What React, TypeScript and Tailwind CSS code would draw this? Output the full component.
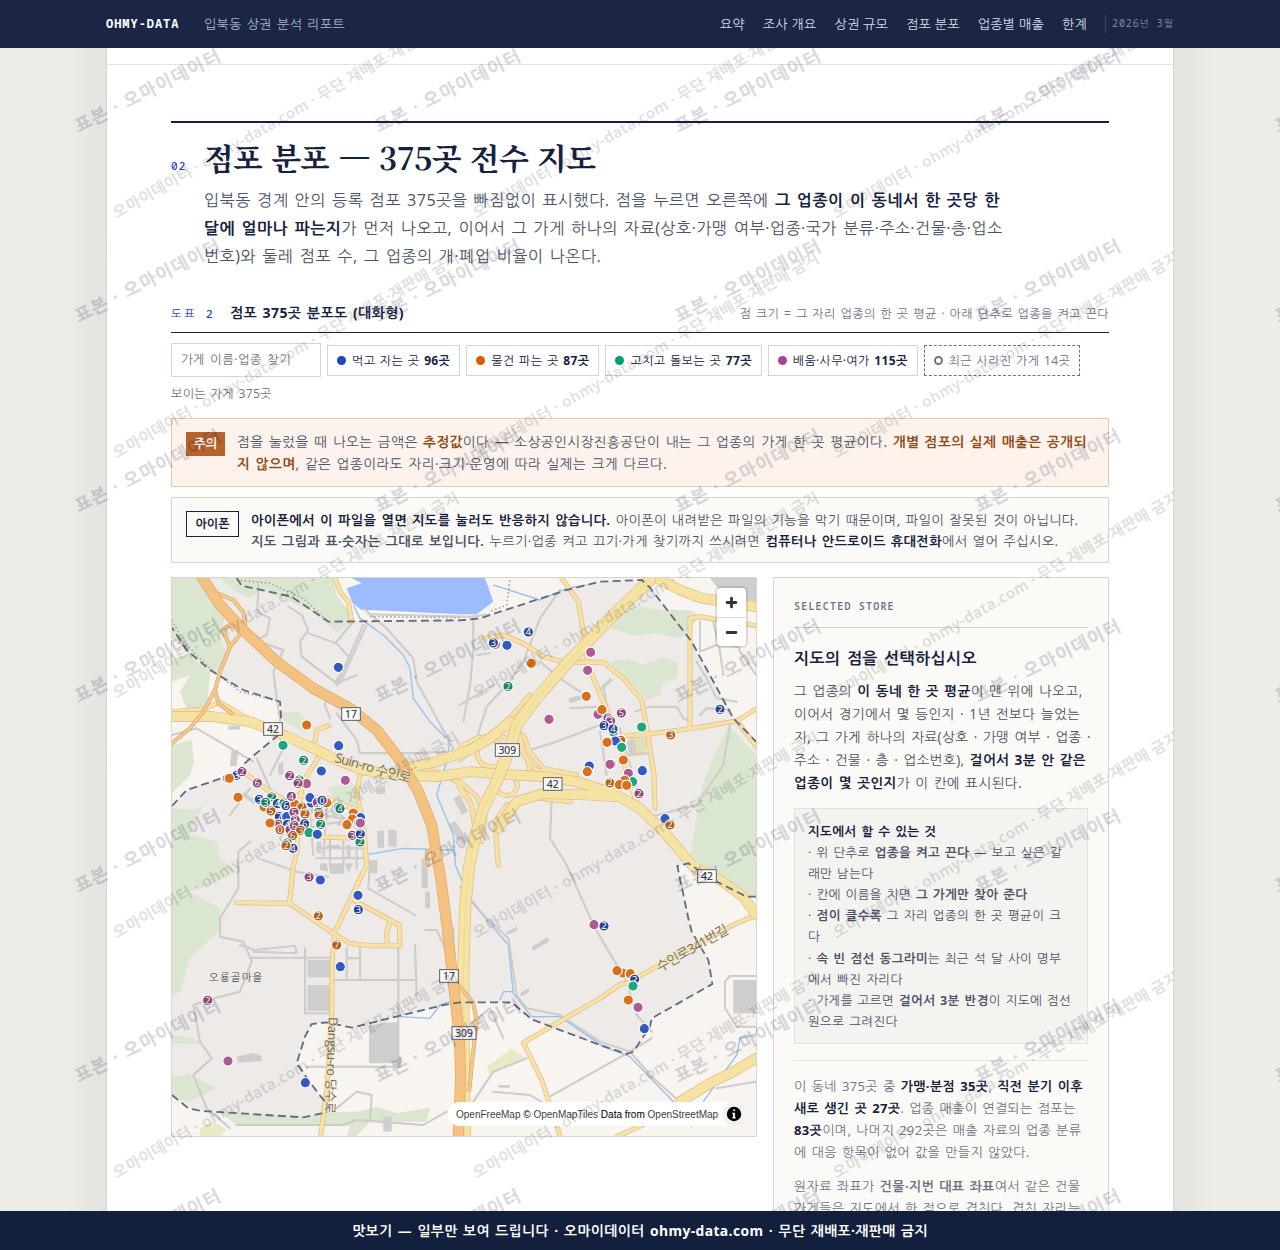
import { Minus, Plus } from "lucide-react";

const KO = "tracking-[0.029em] [word-spacing:0.1em]";
const MONO = "font-['Noto_Sans_Mono',NanumGothic,'Noto_Sans_CJK_KR',monospace]";

const NAV = ["요약", "조사 개요", "상권 규모", "점포 분포", "업종별 매출", "한계"];

const CHIPS = [
  { label: "먹고 자는 곳", count: "96곳", dot: "bg-[#1d47b8]" },
  { label: "물건 파는 곳", count: "87곳", dot: "bg-[#d55e00]" },
  { label: "고치고 돌보는 곳", count: "77곳", dot: "bg-[#009e73]" },
  { label: "배움·사무·여가", count: "115곳", dot: "bg-[#a5468c]" },
];

type Kind = "b" | "o" | "g" | "p";
type Pin = [number, number, Kind, string?];

const FILL: Record<Kind, string> = { b: "#315bc1", o: "#d9701b", g: "#1fa67f", p: "#ae5a95" };
const FILL_GROUP: Record<Kind, string> = { b: "#24489f", o: "#c2600f", g: "#138a68", p: "#93447c" };

const PINS: Pin[] = [
  [505, 277, "b"], [410, 450, "o"], [339, 511, "g"], [506, 512, "b"], [401, 556, "g", "2"], [454, 588, "b"],
  [526, 616, "p"], [200, 601, "b", "3"], [172, 610, "p"], [216, 590, "p", "2"], [178, 610, "o"], [262, 624, "p", "6"],
  [359, 602, "p", "2"], [388, 615, "g", "2"], [410, 626, "p"], [384, 625, "p", "2"], [204, 667, "o"],
  // 서쪽 밀집 구역
  [282, 696, "o"], [268, 673, "b", "3"], [305, 666, "g", "2"], [287, 682, "g", "3"], [322, 686, "b", "4"],
  [342, 684, "g", "2"], [303, 708, "o", "5"], [348, 692, "b", "6"], [375, 688, "o"], [364, 664, "p", "4"],
  [396, 696, "o", "2"], [328, 725, "b", "7"], [350, 725, "b"], [372, 712, "p", "5"], [405, 717, "o", "2"],
  [326, 748, "p", "2"], [300, 744, "o"], [352, 748, "b", "4"], [376, 735, "p", "8"], [404, 746, "b", "6"],
  [330, 764, "o", "0"], [360, 764, "p", "2"], [373, 752, "p", "6"], [392, 766, "o", "3"], [368, 782, "o", "6"],
  [424, 684, "b"], [420, 668, "b"], [442, 682, "p", "2"], [470, 683, "o"], [456, 676, "b", "0"],
  [446, 712, "g", "2"], [447, 720, "o", "2"], [452, 748, "g", "2"], [417, 773, "g"], [442, 778, "b"],
  [352, 804, "g", "2"], [369, 820, "b", "4"], [348, 812, "o", "2"],
  [506, 696, "g"], [510, 701, "g", "4"], [550, 714, "o"], [572, 728, "b"], [547, 732, "o"], [566, 743, "g"],
  [571, 744, "p"], [531, 749, "o"], [547, 781, "p", "3"], [570, 801, "g", "2"], [571, 777, "b", "2"],
  // 동쪽 상가
  [969, 204, "b", "2"], [976, 208, "p", "8"], [970, 204, "b", "3"], [1011, 211, "b"], [1075, 171, "b", "4"],
  [1084, 265, "o"], [1014, 334, "g", "2"], [1262, 232, "p"], [1253, 286, "p"], [1249, 364, "o"],
  [1137, 433, "p"], [1284, 418, "p"], [1296, 404, "o"], [1354, 414, "p", "5"], [1314, 429, "p", "6"],
  [1322, 438, "p", "3"], [1302, 452, "b", "3"], [1330, 470, "g", "4"], [1329, 462, "b", "4"],
  [1352, 496, "o", "6"], [1336, 498, "b"], [1311, 502, "o"], [1355, 517, "g"], [1415, 456, "g"],
  [1502, 480, "o", "3"], [1650, 403, "b", "2"], [1360, 555, "o"], [1324, 568, "p"], [1320, 568, "p"],
  [1258, 573, "b"], [1252, 590, "o"], [1375, 595, "p"], [1417, 587, "b"], [1388, 620, "g"],
  [1320, 624, "o", "2"], [1364, 616, "o"], [1348, 629, "o"], [1370, 631, "o"], [1406, 652, "p"],
  [1407, 656, "p", "2"], [1485, 731, "b"], [1500, 750, "o", "2"],
  // 남쪽
  [417, 906, "p", "3"], [451, 915, "b"], [564, 961, "b"], [565, 1004, "b", "3"], [445, 1023, "o", "2"],
  [500, 1110, "o", "7"], [511, 1175, "b"], [113, 1276, "p", "2"], [174, 1458, "p"], [406, 1523, "b"],
  [1272, 1049, "p"], [1302, 1053, "b", "2"], [1358, 1194, "o"], [1341, 1187, "o"], [1381, 1196, "o"],
  [1394, 1213, "b", "2"], [1389, 1233, "g"], [1375, 1275, "o"], [1404, 1297, "p"], [1423, 1361, "b"],
];

const GREENS = [
  "M6 9H90L120 60 165 120 150 190 170 235 145 290 120 285 50 225 6 190Z",
  "M150 9H490L500 60 530 100 545 140 500 172 430 110 350 75 270 45 240 70 200 50Z",
  "M6 255L55 235 120 290 112 380 90 430 50 400 30 350 60 300 6 320Z",
  "M6 510L65 495 72 560 60 600 6 655Z",
  "M6 700L70 705 100 690 60 780 140 800 150 850 200 890 120 930 60 950 150 1000 155 1060 60 1150 30 1250 6 1260Z",
  "M6 1382L50 1385 95 1400 90 1408 6 1405Z",
  "M6 1505L60 1498 140 1540 60 1580 6 1565Z",
  "M150 1612L420 1625 470 1610 560 1610 620 1595 680 1615 780 1598 770 1640 600 1640 560 1683 530 1683 540 1652 200 1650Z",
  "M1320 160L1350 110 1400 95 1470 105 1560 105 1590 120 1560 160 1530 190 1460 175 1390 180Z",
  "M1320 262L1370 252 1420 270 1480 245 1525 265 1520 310 1480 320 1470 360 1430 375 1390 330Z",
  "M1675 450L1758 540V965L1720 960 1640 910 1562 840 1580 720 1600 620Z",
  "M475 640L540 620 562 640 555 700 500 690Z",
  "M335 412L385 410 432 460 400 470 345 440Z",
];

const MINOR = [
  "M265 30L262 110 300 130 290 180 255 195 340 225 310 290 320 370 332 450",
  "M355 95L395 120 415 165 390 200 395 245 500 325 560 300",
  "M415 175L500 205 540 250 495 325",
  "M495 205L550 140 M500 330L580 150 M510 325L590 150",
  "M580 100L650 160 730 250 740 320 800 430 850 520 830 560",
  "M595 118L900 125 960 118",
  "M470 350L465 390 480 430 M500 415L560 495 570 535H720L840 530",
  "M910 125V230L900 330 880 440 M920 240L960 235 M1170 45L1110 130 1060 260 1010 330 950 395 920 490",
  "M870 390L970 330 M1110 260L1170 310 1230 350 M1200 400L1290 395 M1080 525L1160 500 1290 450",
  "M1395 410L1440 395 1520 395 1540 430 1560 440 M1580 260L1610 310 1640 370 1700 380 M1590 420L1610 400 1680 405",
  "M1145 675L1140 790 1190 870 1275 1060 1370 1220 1400 1320 1445 1370",
  "M1425 730L1580 690 1660 570 1680 450",
  "M1590 140V230L1640 210 1700 215 M1630 140L1650 230 1660 300 M1680 110L1710 230 1758 300",
  "M1290 470L1310 600 M1300 330L1320 450 M1350 460L1400 640 M1370 540L1430 535",
  "M240 800L205 830 205 940 150 1030 150 1085 220 1100 245 1160 210 1250 150 1265 70 1290 90 1400 125 1450 70 1500 110 1600 180 1660",
  "M210 1110L255 1125 375 1112 380 1135 250 1130 M245 1148H485 M405 1120V1315H485",
  "M495 1215H740 M570 1115V1215 M685 1050V1470 M735 1110L740 1260 M410 1475H690L690 1450",
  "M530 1120V1210 M530 1150H565 M265 850L380 890 475 905",
  "M600 860L595 940 735 1020 M850 1060V1320 M765 1065H800L830 1130",
  "M500 1600L560 1550 605 1560 600 1635 M200 1650H520L560 1635 760 1650 830 1610",
  "M870 935L950 1030 1015 1090 1040 1260 1070 1300 1170 1320 1290 1400 1380 1430 1450 1510 1530 1580",
  "M1380 1430L1130 1570 M1445 1390L1380 1430 M900 1350L960 1300 1000 1390",
  "M1070 1450L970 1490 910 1580 M970 1550L1080 1560 1130 1590",
  "M1758 1203H1680L1665 1220V1300L1700 1355H1758 M1640 1540L1758 1520",
  "M370 700L560 740 M420 720L430 840 M470 700L460 850 M500 710L560 760 M410 760L560 730 M240 640L180 720",
  "M440 820H590 M480 790V880 M520 800V890 M560 800V880 M440 850H580",
  "M6 480L80 460 250 560 M260 550L300 640 M350 500L300 600",
];

const YELLOW = [
  "M495 9L510 50 535 80 545 140",
  "M225 595L300 650 370 690 400 700",
  "M370 660L470 670 560 705",
  "M450 540L400 620 385 700 382 820 370 875 358 985",
  "M435 500L440 465 475 452",
  "M430 785L560 790",
  "M570 600L560 660 580 740 590 870 580 890 545 965 495 1070 487 1145 485 1365 470 1545 452 1685",
  "M200 983L358 985 490 1075 540 1105 600 1112H690L688 1050 550 975",
  "M652 1110L650 1070 660 1042",
  "M6 410L100 402 150 382 250 440",
  "M1175 9L1225 80 1238 160 1250 255",
  "M945 190L1000 180 1060 205 1120 245 1190 262 1300 262 1360 310 1415 375 1432 470 1452 600 1455 700",
  "M1250 262L1300 380 1345 480 1370 600 1400 680",
  "M1370 482L1430 478 1570 460 1700 438 1758 402",
  "M1700 438L1758 512",
  "M1560 455V130L1590 125 1758 152",
  "M1758 1020L1690 1050 1520 1142 1370 1225 1350 1228 1290 1270 1060 1403 1115 1515 1170 1683",
  "M1340 1685L1430 1645",
  "M870 515L920 490 980 480 1040 500 1075 560 1080 600",
  "M922 530a38 38 0 1 0 80 10a38 38 0 1 0 -80 -10",
  "M980 620a30 30 0 1 0 60 20a30 30 0 1 0 -60 -20",
  "M1045 460L1060 540 1100 585 1180 600",
  "M1060 480L1078 530 1120 580 1220 600",
  "M870 555L930 500 1010 440 1080 360",
  "M870 620L920 665 945 720 935 800",
  "M870 640L905 690 915 760 900 850",
  "M985 870L975 740 1010 690 1100 668 1200 680 1150 672",
  "M700 580L800 590 860 620 900 680",
];

const WIDE = [
  "M6 424L130 425 240 440 340 480 430 520 500 555 580 585 660 598 800 605 900 590 1000 598 1120 605 1220 620 1330 655 1410 700 1490 780 1570 875 1650 915 1720 965 1758 1020",
  "M700 580L800 560 900 525 960 490 1020 440",
  "M1470 15L1530 45 1590 68 1758 95",
  "M985 760L1040 680 1120 655 1250 660 1340 665",
  "M1530 1580L1620 1525 1690 1490 1758 1450",
];

const EXPRESSWAY = [
  "M1440 15L1320 130 1200 255 1100 370 1040 450 1020 520 980 620 940 700 915 790 898 870 885 1000 880 1200 881 1400 885 1683",
];

const RAMPS = [
  "M130 50L190 75 222 115 225 160 180 215 150 290 135 345 100 410 60 460 6 505",
  "M180 215L158 165 180 150 222 175",
  "M135 345L145 385 185 415",
  "M870 1235L910 1285 920 1340 908 1445 898 1545",
  "M775 870L770 830 800 820 M840 1200L870 1235",
];

const MOTORWAY = "M95 5L150 90 225 170 320 260 430 340 540 400 620 465 690 555 745 650 785 750 805 870 810 895 830 1045 850 1225 868 1385 872 1505 865 1680";

const BOUNDARY =
  "M200 9L215 32 365 65 475 140 870 136 930 130 1190 45 1290 20 1415 15 1440 38 1565 200 1690 430 1758 500V965L1730 965 1640 920 1570 875 1555 865 1522 873 1555 1030 1565 1070 1615 1155 1627 1227 1445 1330 1440 1355 1390 1430 1370 1437 1290 1410 1085 1333 1025 1282 870 1282 820 1290 545 1358 470 1342 425 1347 405 1385 380 1465 415 1515 450 1562 478 1595 455 1615 400 1627 95 1608 55 1600 6 1560";
const BOUNDARY_WEST = "M6 693L50 645 190 598 235 555 325 480 335 455 330 380 220 345 120 285 50 225 6 158";

const RIVERS = [
  "M550 90L570 130 640 180 700 240 720 280 730 370 780 440 840 500 830 560 800 660 850 780 856 870 900 975 1015 1110 1030 1255 1085 1325 1170 1325 1300 1415 1380 1445 1510 1580 1565 1655",
  "M595 838L700 820 850 825",
  "M690 1325L780 1330 810 1290 870 1270 M990 1275L1000 1250 1030 1250",
  "M970 30L1110 75 1190 40 1250 30",
  "M1600 1580L1700 1440 1710 1390 1758 1378",
];

const BUILDINGS = [
  "M412 1155h68v52h-68z", "M412 1230h68v78h-68z", "M597 1350L685 1340V1465H597Z", "M1690 1215h68v100h-68z",
  "M185 525h20l-5 48h-20z", "M325 565l15-5v40h-15z", "M622 768h20v50h-20z", "M655 765h25v50h-25z",
  "M850 670l20-10 25 50-20 10z", "M835 750l20-12 40 60-20 12z", "M755 850h18v90h-18z", "M765 950h15v50h-15z",
  "M480 865h40v32h-40z", "M450 865l20 0 5 25-25-5z", "M525 865h25l-15 30z", "M600 855h22v40h-22z",
  "M200 1445l50-12 25 10v15l-70 5z", "M640 1625h25v45h-25z", "M615 640l30-8v25h-25z", "M175 452h35v12h-35z",
  "M1085 1115l48-28 5 12-48 28z", "M1010 1070l30-15 3 10-30 15z", "M1050 1255l25-15 4 10-25 15z",
  "M1290 340l30-30 10 5-40 35z", "M1195 370l60-15 5 12-60 18z", "M1370 500l20-10 10 40-20 15z", "M1620 9h138v70l-100-20z",
  "M410 690l20-8 10 30-20 8z", "M480 700l20-8 12 26-22 10z", "M500 740h30v12h-30z", "M440 800h14v34h-14z", "M470 810h40v10h-40z",
  "M220 650l40 28-8 10-40-28z", "M300 690l35-15 4 12-35 15z", "M530 810h12v38h-12z", "M985 1530h35v8h-35z",
];

const SHIELDS: [number, number, string][] = [
  [543, 417, "17"], [309, 462, "42"], [1012, 525, "309"], [1148, 627, "42"], [837, 1203, "17"], [882, 1374, "309"], [1611, 903, "42"],
];

function Roads({ list, width, fill, edge }: { list: string[]; width: number; fill: string; edge: string }) {
  return (
    <g fill="none" strokeLinejoin="round" strokeLinecap="round">
      {list.map((d) => <path key={d} d={d} stroke={edge} strokeWidth={width + 4} />)}
      {list.map((d) => <path key={d} d={d} stroke={fill} strokeWidth={width} />)}
    </g>
  );
}

function StoreMap() {
  return (
    <svg viewBox="6 9 1752 1674" className="block h-full w-full" preserveAspectRatio="none">
      <rect x="6" y="9" width="1752" height="1674" fill="#f8f4f0" />
      <path d={`${BOUNDARY}V693${BOUNDARY_WEST.replace("M6 693", "")}V9Z`} fill="#edeae8" />
      {GREENS.map((d) => <path key={d} d={d} fill="#dae6cf" />)}
      <path d="M950 1475L1025 1420 1070 1450 960 1500Z M90 1660L130 1640 170 1665 150 1683H90Z" fill="#e8e9c6" />
      <path d="M1375 480L1430 490V540L1380 545Z" fill="#dfdfb8" />
      <path d="M545 9L575 25 530 40 548 85 575 105 600 105 870 118 920 118 970 80 945 9Z" fill="#9dbcff" />
      {BUILDINGS.map((d) => <path key={d} d={d} fill="#d0cecc" />)}
      {RIVERS.map((d) => <path key={d} d={d} fill="none" stroke="#93c3f0" strokeWidth="4" strokeLinejoin="round" />)}
      <Roads list={MINOR} width={2} fill="#d9d6d4" edge="#c8c6c4" />
      <g fill="none" stroke="#aaa9a8" strokeWidth="5" strokeDasharray="5 7">
        <path d="M200 15L300 25 400 70 470 135M600 125L870 128M6 135L40 200 120 280 210 350 325 378M1020 15L1010 90 960 110" />
      </g>
      <Roads list={YELLOW} width={11} fill="#f5e2a4" edge="#e6b98b" />
      <Roads list={WIDE} width={28} fill="#f5e3a3" edge="#e3b984" />
      <Roads list={EXPRESSWAY} width={32} fill="#f5e3a3" edge="#e3b984" />
      <path d={EXPRESSWAY[0]} fill="none" stroke="#e9cf94" strokeWidth="1.500" />
      <Roads list={RAMPS} width={8} fill="#f4c98c" edge="#dda468" />
      <Roads list={[MOTORWAY]} width={29} fill="#f4c280" edge="#e2a569" />
      <g fill="none" stroke="#636b80" strokeWidth="5.500" strokeDasharray="24 13">
        <path d={BOUNDARY.replace("V965L1730 965", "M1758 965L1730 965")} />
        <path d={BOUNDARY_WEST} />
      </g>
      <g fontFamily="'Open Sans',NanumGothic,'Noto Sans CJK KR',sans-serif" fill="#6b655c" stroke="#f5e9c8" strokeWidth="3" paintOrder="stroke">
        <text x="492" y="560" fontSize="40" transform="rotate(16 492 560)" textLength="236">Suin-ro 수인로</text>
        <text x="476" y="1326" fontSize="38" transform="rotate(92 476 1326)" textLength="290">Dangsu-ro 당수로</text>
        <text x="1470" y="1192" fontSize="40" transform="rotate(-30 1470 1192)" textLength="240">수인로341번길</text>
        <text x="117" y="1219" fontSize="31" fill="#444" stroke="#f4f1ee" textLength="160">오룡골마을</text>
      </g>
      <g fontFamily="'Open Sans',sans-serif" fontSize="31" fill="#333" stroke="#333" strokeWidth="0.600" textAnchor="middle">
        {SHIELDS.map(([x, y, n]) => (
          <g key={`${x}-${y}`}>
            <rect x={x - (n.length > 2 ? 36 : 28)} y={y - 19} width={n.length > 2 ? 72 : 56} height="38" fill="#fbfbfb" stroke="#5a5f66" strokeWidth="3" />
            <text x={x} y={y + 11}>{n}</text>
          </g>
        ))}
      </g>
      <g fontFamily="'Open Sans',sans-serif" fontSize="29" fill="#fff" textAnchor="middle">
        {PINS.map(([x, y, kind, n], i) => (
          <g key={i}>
            <circle cx={x} cy={y} r="15.500" fill={n ? FILL_GROUP[kind] : FILL[kind]} stroke="#fff" strokeWidth="3.500" />
            {n && <text x={x} y={y + 10} stroke="#5b5560" strokeWidth="1.500" paintOrder="stroke">{n}</text>}
          </g>
        ))}
      </g>
    </svg>
  );
}

const range = (n: number) => Array.from({ length: n }, (_, i) => i);

function PageWatermark() {
  return (
    <svg className="pointer-events-none absolute inset-0 h-full w-full" viewBox="0 48 1280 1163" fill="#14143c" opacity="0.16">
      {range(7).flatMap((r) =>
        range(5).map((c) => {
          const x = 79 + c * 300;
          const y = 133 + r * 190;
          return (
            <text key={`${r}-${c}`} x={x} y={y} transform={`rotate(-27 ${x} ${y})`} fontFamily="NanumGothic,'Noto Sans CJK KR',sans-serif" fontWeight="700" fontSize="17.5" stroke="#14143c" strokeWidth="0.400" textLength="160">
              표본 · 오마이데이터
            </text>
          );
        })
      )}
    </svg>
  );
}

function SheetWatermark() {
  return (
    <svg className="pointer-events-none absolute inset-0 h-full w-full" viewBox="107 48 1066 1163" fill="#000" opacity="0.12">
      {range(5).flatMap((r) =>
        range(3).map((c) => {
          const x = 117 + c * 360;
          const y = 219 + r * 240;
          return (
            <text key={`${r}-${c}`} x={x} y={y} transform={`rotate(-30 ${x} ${y})`} fontFamily="'Open Sans',NanumGothic,'Noto Sans CJK KR',sans-serif" fontWeight="600" fontSize="15" stroke="#000" strokeWidth="0.200" textLength="396">
              오마이데이터 · ohmy-data.com · 무단 재배포·재판매 금지
            </text>
          );
        })
      )}
    </svg>
  );
}

function TopBar() {
  return (
    <header className="flex h-12 shrink-0 items-center justify-between bg-[#1a2644] px-[106px]">
      <div className="flex items-center">
        <span className={`${MONO} w-[98px] text-[12px] font-bold tracking-[0.08em] text-white`}>OHMY-DATA</span>
        <span className={`pt-px text-[13px] text-[#a9b3c8] ${KO}`}>입북동 상권 분석 리포트</span>
      </div>
      <nav className="flex items-center">
        {NAV.map((n) => (
          <a key={n} className="mr-[18px] pt-px text-[13.2px] tracking-[0.01em] text-[#d5dae6]">{n}</a>
        ))}
        <span className={`${MONO} h-[18px] border-l border-[#3a4866] pl-1.5 text-[10px] leading-[17px] tracking-[0.09em] text-[#7f8aa5]`}>2026년 3월</span>
      </nav>
    </header>
  );
}

function SidePanel() {
  return (
    <aside className="h-[800px] w-[336px] border border-[#d9d5cc] bg-[#fbfaf6] px-5 whitespace-nowrap">
      <div className={`${MONO} flex h-[50px] items-end border-b border-[#d9d5cc] pb-[13px] text-[10px] leading-4 font-semibold tracking-[0.12em] text-[#6a7488]`}>
        SELECTED STORE
      </div>
      <h4 className={`mt-[18px] text-[16px] leading-6 font-bold text-[#14213f] ${KO}`}>지도의 점을 선택하십시오</h4>
      <p className={`mt-[9px] text-[13.6px] leading-[23px] text-[#4a5468] [&_b]:text-[#14213f] ${KO}`}>
        그 업종의 <b>이 동네 한 곳 평균</b>이 맨 위에 나오고,<br />
        이어서 경기에서 몇 등인지 · 1년 전보다 늘었는<br />
        지, 그 가게 하나의 자료(상호 · 가맹 여부 · 업종 ·<br />
        주소 · 건물 · 층 · 업소번호), <b>걸어서 3분 안 같은</b><br />
        <b>업종이 몇 곳인지</b>가 이 칸에 표시된다.
      </p>
      <div className={`mt-[14px] h-[236px] border border-[#e3e1dc] bg-[#f4f3f0] px-[13px] pt-3 text-[12.5px] leading-[21.1px] text-[#4a5468] ${KO}`}>
        <b className="text-[#14213f]">지도에서 할 수 있는 것</b><br />
        · 위 단추로 <b>업종을 켜고 끈다</b> — 보고 싶은 갈<br />
        래만 남는다<br />
        · 칸에 이름을 치면 <b>그 가게만 찾아 준다</b><br />
        · <b>점이 클수록</b> 그 자리 업종의 한 곳 평균이 크<br />
        다<br />
        · <b>속 빈 점선 동그라미</b>는 최근 석 달 사이 명부<br />
        에서 빠진 자리다<br />
        · 가게를 고르면 <b>걸어서 3분 반경</b>이 지도에 점선<br />
        원으로 그려진다
      </div>
      <div className={`mt-4 border-t border-[#e5e2da] pt-[14px] text-[13px] leading-[22px] text-[#6c7587] ${KO}`}>
        <p className="[&_b]:text-[#14213f]">
          이 동네 375곳 중 <b>가맹·분점 35곳</b>, <b>직전 분기 이후</b><br />
          <b>새로 생긴 곳 27곳</b>. 업종 매출이 연결되는 점포는<br />
          <b>83곳</b>이며, 나머지 292곳은 매출 자료의 업종 분류<br />
          에 대응 항목이 없어 값을 만들지 않았다.
        </p>
        <p className="mt-3">
          원자료 좌표가 <b>건물·지번 대표 좌표</b>여서 같은 건물<br />
          가게들은 지도에서 한 점으로 겹친다. 겹친 자리는
        </p>
      </div>
    </aside>
  );
}

export default function App() {
  return (
    <div lang="ko" className="flex h-[1250px] flex-col overflow-hidden bg-[#eeece7] font-['Open_Sans',NanumGothic,'Noto_Sans_CJK_KR',sans-serif]">
      <TopBar />
      <div className="relative min-h-0 flex-1 overflow-hidden">
        <main className="relative mx-[106px] h-[1163px] overflow-hidden border-x border-[#d9d5cc] bg-white">
          <div className="h-[17px] border-b border-[#e5e2da]" />
          <section className="mx-16 mt-14 border-t-2 border-[#14213f] whitespace-nowrap">
            <div className="flex items-baseline pt-[13px]">
              <span className={`${MONO} w-[33px] text-[11px] font-medium tracking-[0.1em] text-[#1d47b8]`}>02</span>
              <h2 className="font-['Noto_Serif_KR','Noto_Serif_CJK_KR',serif] text-[30.8px] leading-[42px] font-bold tracking-[-0.02em] text-[#14213f]">점포 분포 — 375곳 전수 지도</h2>
            </div>
            <p className={`mt-2 ml-[33px] text-[16.12px] leading-7 text-[#4a5468] [&_b]:text-[#14213f] ${KO}`}>
              입북동 경계 안의 등록 점포 375곳을 빠짐없이 표시했다. 점을 누르면 오른쪽에 <b>그 업종이 이 동네서 한 곳당 한</b><br />
              <b>달에 얼마나 파는지</b>가 먼저 나오고, 이어서 그 가게 하나의 자료(상호·가맹 여부·업종·국가 분류·주소·건물·층·업소<br />
              번호)와 둘레 점포 수, 그 업종의 개·폐업 비율이 나온다.
            </p>

            <div className="mt-[30px] flex h-[33px] items-baseline border-b border-[#14213f] pt-[2px]">
              <span className={`${MONO} w-[59px] text-[11.5px] font-medium tracking-[0.18em] text-[#1d47b8]`}>도표 2</span>
              <h3 className={`text-[14px] font-bold text-[#14213f] ${KO}`}>점포 375곳 분포도 (대화형)</h3>
              <span className={`ml-auto text-[12.1px] text-[#6a7488] ${KO}`}>점 크기 = 그 자리 업종의 한 곳 평균 · 아래 단추로 업종을 켜고 끈다</span>
            </div>

            <div className="mt-[10px] flex items-center gap-1.5">
              <div className={`h-[34px] w-[150px] border border-[#d9d5cc] bg-white pl-[9px] text-[12.5px] leading-8 text-[#757575] ${KO}`}>가게 이름·업종 찾기</div>
              {CHIPS.map((c) => (
                <div key={c.label} className={`mt-px flex h-[31px] items-center border border-[#d9d5cc] bg-white px-[9px] text-[12px] text-[#14213f] ${KO}`}>
                  <i className={`mr-[6px] size-[9px] rounded-full ${c.dot}`} />
                  {c.label}&nbsp;<b>{c.count}</b>
                </div>
              ))}
              <div className={`mt-px flex h-[31px] items-center border border-dashed border-[#6a7488] bg-white px-[9px] text-[12px] text-[#6a7488] ${KO}`}>
                <i className="mr-[6px] size-[9px] rounded-full border-2 border-[#6a7488]" />
                최근 사라진 가게 14곳
              </div>
            </div>
            <p className={`mt-2 text-[12px] leading-[18px] text-[#6a7488] ${KO}`}>보이는 가게 375곳</p>

            <div className="mt-[15px] flex h-[69px] border border-[#e8c9ae] bg-[#fdf3ec] pt-3 pl-[14px]">
              <span className="mt-[1px] mr-3 h-6 w-[39px] bg-[#b5622b] text-center text-[12.5px] leading-6 font-bold text-white">주의</span>
              <p className={`text-[13.71px] leading-[22px] text-[#4a5468] [&_b]:text-[#8f4a17] ${KO}`}>
                점을 눌렀을 때 나오는 금액은 <b>추정값</b>이다 — 소상공인시장진흥공단이 내는 그 업종의 가게 한 곳 평균이다. <b>개별 점포의 실제 매출은 공개되</b><br />
                <b>지 않으며</b>, 같은 업종이라도 자리·크기·운영에 따라 실제는 크게 다르다.
              </p>
            </div>
            <div className="mt-[10px] flex h-[66px] border border-[#d9d5cc] bg-[#fbfaf6] pt-[11px] pl-[14px]">
              <span className="mt-[2px] mr-3 h-[26px] w-[53px] border border-[#14213f] text-center text-[12px] leading-6 font-bold text-[#14213f]">아이폰</span>
              <p className={`pt-px text-[13.19px] leading-[21px] text-[#4a5468] ${KO}`}>
                <b className="text-[#14213f]">아이폰에서 이 파일을 열면 지도를 눌러도 반응하지 않습니다.</b> 아이폰이 내려받은 파일의 기능을 막기 때문이며, 파일이 잘못된 것이 아닙니다.<br />
                <b>지도 그림과 표·숫자는 그대로 보입니다.</b> 누르기·업종 켜고 끄기·가게 찾기까지 쓰시려면 <b className="text-[#14213f]">컴퓨터나 안드로이드 휴대전화</b>에서 열어 주십시오.
              </p>
            </div>

            <div className="mt-[14px] flex items-start gap-4">
              <div className="relative h-[560px] w-[586px] border border-[#d9d5cc]">
                <StoreMap />
                <div className="absolute top-[10px] right-[10px] w-[29px] rounded bg-white shadow-[0_0_0_2px_rgba(0,0,0,0.1)]">
                  <button className="flex h-[30px] w-full items-center justify-center border-b border-[#ddd]"><Plus size={15} strokeWidth={4.5} color="#333" /></button>
                  <button className="flex h-[28px] w-full items-center justify-center"><Minus size={15} strokeWidth={4.5} color="#333" /></button>
                </div>
                <div className="absolute right-[10px] bottom-[10px] flex h-6 w-[298px] items-center justify-between rounded-xl bg-white pl-2 font-['Liberation_Sans',sans-serif] text-[10px] text-[#404040]">
                  <span>OpenFreeMap <span className="text-black">©</span> OpenMapTiles <span className="text-black">Data from</span> OpenStreetMap</span>
                  <span className="flex size-6 items-center justify-center rounded-full bg-[#f2f2f2]">
                    <svg viewBox="0 0 20 20" className="size-[18px]" fillRule="evenodd">
                      <path d="M2 10a8 8 0 1 0 16 0a8 8 0 1 0-16 0M9 5.8a1.2 1.2 0 1 0 2.4 0a1.2 1.2 0 1 0-2.4 0M8 8.5h3.2v5H12V15H8v-1.500h.8V10H8z" />
                    </svg>
                  </span>
                </div>
              </div>
              <SidePanel />
            </div>
          </section>
          <SheetWatermark />
        </main>
        <div className="pointer-events-none absolute inset-y-0 left-0 w-[106px] bg-linear-to-r from-transparent from-60% to-black/4" />
        <div className="pointer-events-none absolute inset-y-0 right-0 w-[106px] bg-linear-to-l from-transparent from-60% to-black/4" />
        <PageWatermark />
      </div>
      <footer className={`h-[39px] shrink-0 bg-[#12203e] text-center text-[13.85px] leading-[39px] font-bold text-white ${KO}`}>
        맛보기 — 일부만 보여 드립니다 · 오마이데이터 ohmy-data.com · 무단 재배포·재판매 금지
      </footer>
    </div>
  );
}
